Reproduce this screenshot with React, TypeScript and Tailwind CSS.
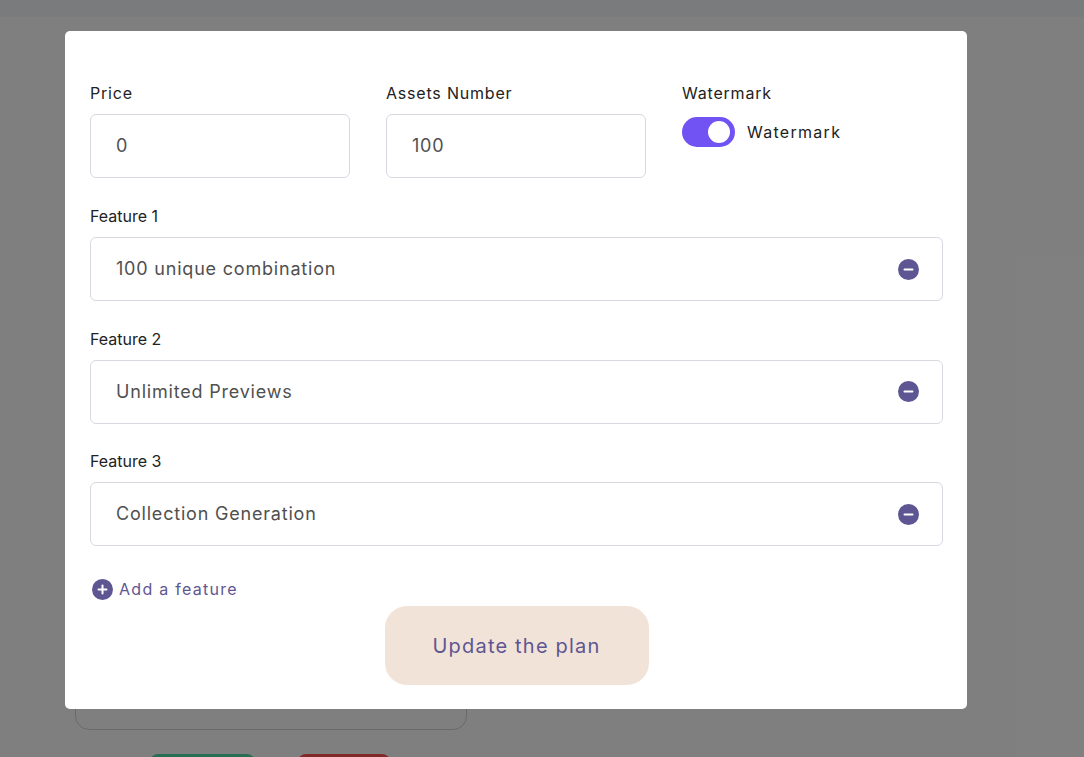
import React from "react";

const FEATURES = ["100 unique combination", "Unlimited Previews", "Collection Generation"];

function CircleIcon({ plus }: { plus?: boolean }) {
  return (
    <svg width="21" height="21" viewBox="0 0 21 21" className="shrink-0">
      <circle cx="10.5" cy="10.5" r="10.5" fill="#5e5692" />
      <rect x="5.5" y="9.5" width="10" height="2" rx="1" fill="#fff" />
      {plus && <rect x="9.5" y="5.5" width="2" height="10" rx="1" fill="#fff" />}
    </svg>
  );
}

export default function App() {
  return (
    <div
      className="relative h-[757px] w-[1084px] overflow-hidden bg-white tracking-[0.05em]"
      style={{ fontFamily: "Inter, 'Noto Sans', sans-serif" }}
    >
      {/* page behind the dialog */}
      <div className="h-[17px] bg-[#f4f6fa]" />
      <div className="ml-[75px] mt-[40px] h-[673px] w-[392px] rounded-[14px] border border-[#d4d4d4]" />
      <div className="ml-[150px] mt-[24px] flex gap-[43px]">
        <div className="h-[30px] w-[105px] rounded-t-lg bg-[#4fdcaa]" />
        <div className="h-[30px] w-[92px] rounded-t-lg bg-[#ff5252]" />
      </div>

      {/* overlay + dialog */}
      <div className="absolute inset-0 bg-black/50 pl-[65px] pt-[31px]">
        <div className="w-[902px] rounded-[5px] bg-white pb-[24px] pl-[25px] pr-[24px] pt-[50px]">
          <div className="mb-[26px] grid grid-cols-[260px_260px_260px] gap-x-[36px]">
            <div>
              <label className="mb-[9px] block text-base leading-6 text-[#222]">Price</label>
              <div className="flex h-[64px] items-center rounded-md border border-[#d6d9e0] px-[25px] text-lg text-[#505050]">
                0
              </div>
            </div>
            <div>
              <label className="mb-[9px] block text-base leading-6 text-[#222]">Assets Number</label>
              <div className="flex h-[64px] items-center rounded-md border border-[#d6d9e0] px-[25px] text-lg text-[#505050]">
                100
              </div>
            </div>
            <div>
              <label className="block text-base leading-6 text-[#222]">Watermark</label>
              <div className="mt-[12px] flex items-center gap-[12px]">
                <div className="flex h-[30px] w-[53px] items-center justify-end rounded-full bg-[#7152f3] pr-[5px]">
                  <div className="h-[22px] w-[22px] rounded-full bg-white" />
                </div>
                <span className="text-base leading-6 tracking-[0.08em] text-[#222]">Watermark</span>
              </div>
            </div>
          </div>

          <div className="flex flex-col gap-[25.5px]">
            {FEATURES.map((f, i) => (
              <div key={f}>
                <label className="mb-[9px] block text-base leading-6 tracking-normal text-[#222]">Feature {i + 1}</label>
                <div className="flex h-[64px] items-center justify-between rounded-md border border-[#d6d9e0] pl-[25px] pr-[23px] text-lg text-[#505050]">
                  <span>{f}</span>
                  <CircleIcon />
                </div>
              </div>
            ))}
          </div>

          <div className="mt-[31px] flex items-center gap-[6px] pl-[2px] text-base leading-6 tracking-[0.08em] text-[#5e5692]">
            <CircleIcon plus />
            <span>Add a feature</span>
          </div>

          <div className="mt-[5px] flex justify-center">
            <button className="h-[79px] w-[264px] rounded-[22px] bg-[#f2e3d8] text-xl tracking-[0.06em] text-[#5e5692]">
              Update the plan
            </button>
          </div>
        </div>
      </div>
    </div>
  );
}
